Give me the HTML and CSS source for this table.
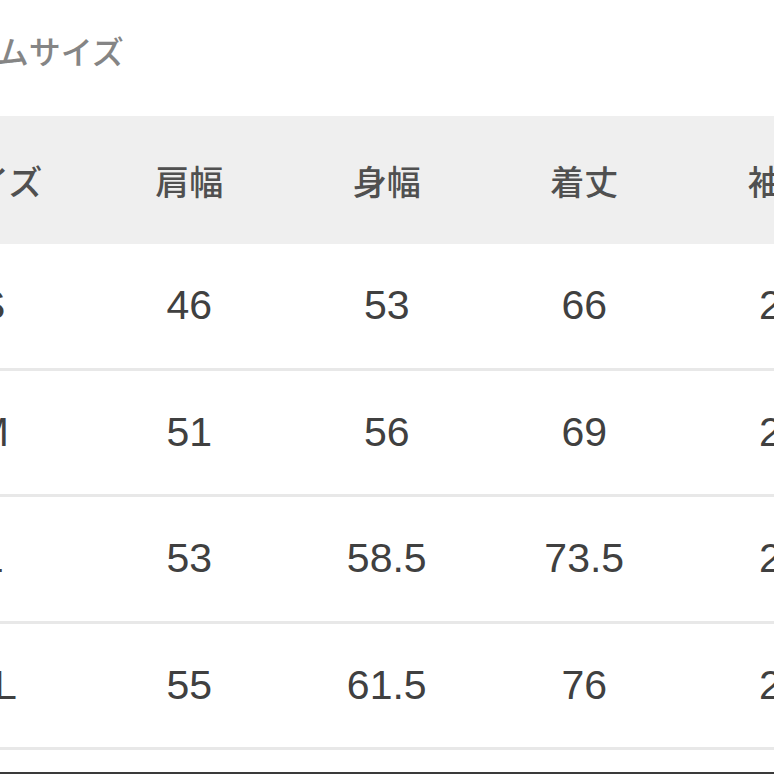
FILE: index.html
```html
<!DOCTYPE html>
<html lang="ja">
<head>
<meta charset="utf-8">
<title>アイテムサイズ</title>
<link rel="stylesheet" href="styles.css">
</head>
<body>
<div class="page">
  <div class="title">アイテムサイズ</div>
  <div class="table">
    <div class="row head">
      <div class="cell">サイズ</div>
      <div class="cell">肩幅</div>
      <div class="cell">身幅</div>
      <div class="cell">着丈</div>
      <div class="cell">袖丈</div>
    </div>
    <div class="row">
      <div class="cell">S</div>
      <div class="cell">46</div>
      <div class="cell">53</div>
      <div class="cell">66</div>
      <div class="cell">22</div>
    </div>
    <div class="row">
      <div class="cell">M</div>
      <div class="cell">51</div>
      <div class="cell">56</div>
      <div class="cell">69</div>
      <div class="cell">23</div>
    </div>
    <div class="row">
      <div class="cell">L</div>
      <div class="cell">53</div>
      <div class="cell">58.5</div>
      <div class="cell">73.5</div>
      <div class="cell">24</div>
    </div>
    <div class="row">
      <div class="cell">XL</div>
      <div class="cell">55</div>
      <div class="cell">61.5</div>
      <div class="cell">76</div>
      <div class="cell">25</div>
    </div>
  </div>
  <div class="edge"></div>
</div>
</body>
</html>
```

FILE: styles.css
```css
html, body {
  margin: 0;
  padding: 0;
  background: #ffffff;
}
body {
  width: 774px;
  height: 774px;
  overflow: hidden;
}
.page {
  width: 774px;
  height: 774px;
  overflow: hidden;
  display: flex;
  flex-direction: column;
}
.title {
  height: 116px;
  box-sizing: border-box;
  padding-top: 34px;
  margin-left: -96px;
  font-family: "Noto Sans CJK JP", "Noto Sans", sans-serif;
  font-size: 32px;
  font-weight: 500;
  line-height: 32px;
  color: #858585;
  white-space: nowrap;
  flex: none;
}
.table {
  margin-left: -107px;
  width: 990px;
  flex: none;
}
.row {
  display: grid;
  grid-template-columns: repeat(5, 197.5px);
  height: 123.5px;
  border-bottom: 3px solid #e8e8e8;
  align-items: center;
  font-family: "Liberation Sans", Arial, sans-serif;
  font-size: 41px;
  color: #404040;
}
.row.head {
  height: 128px;
  border-bottom: none;
  background: #efefef;
  font-family: "Noto Sans CJK JP", "Noto Sans", sans-serif;
  font-size: 34px;
  font-weight: 500;
  color: #505050;
}
.cell {
  text-align: center;
  white-space: nowrap;
}
.edge {
  margin-top: 22px;
  height: 3px;
  background: #3a3a3a;
  flex: none;
}
```
